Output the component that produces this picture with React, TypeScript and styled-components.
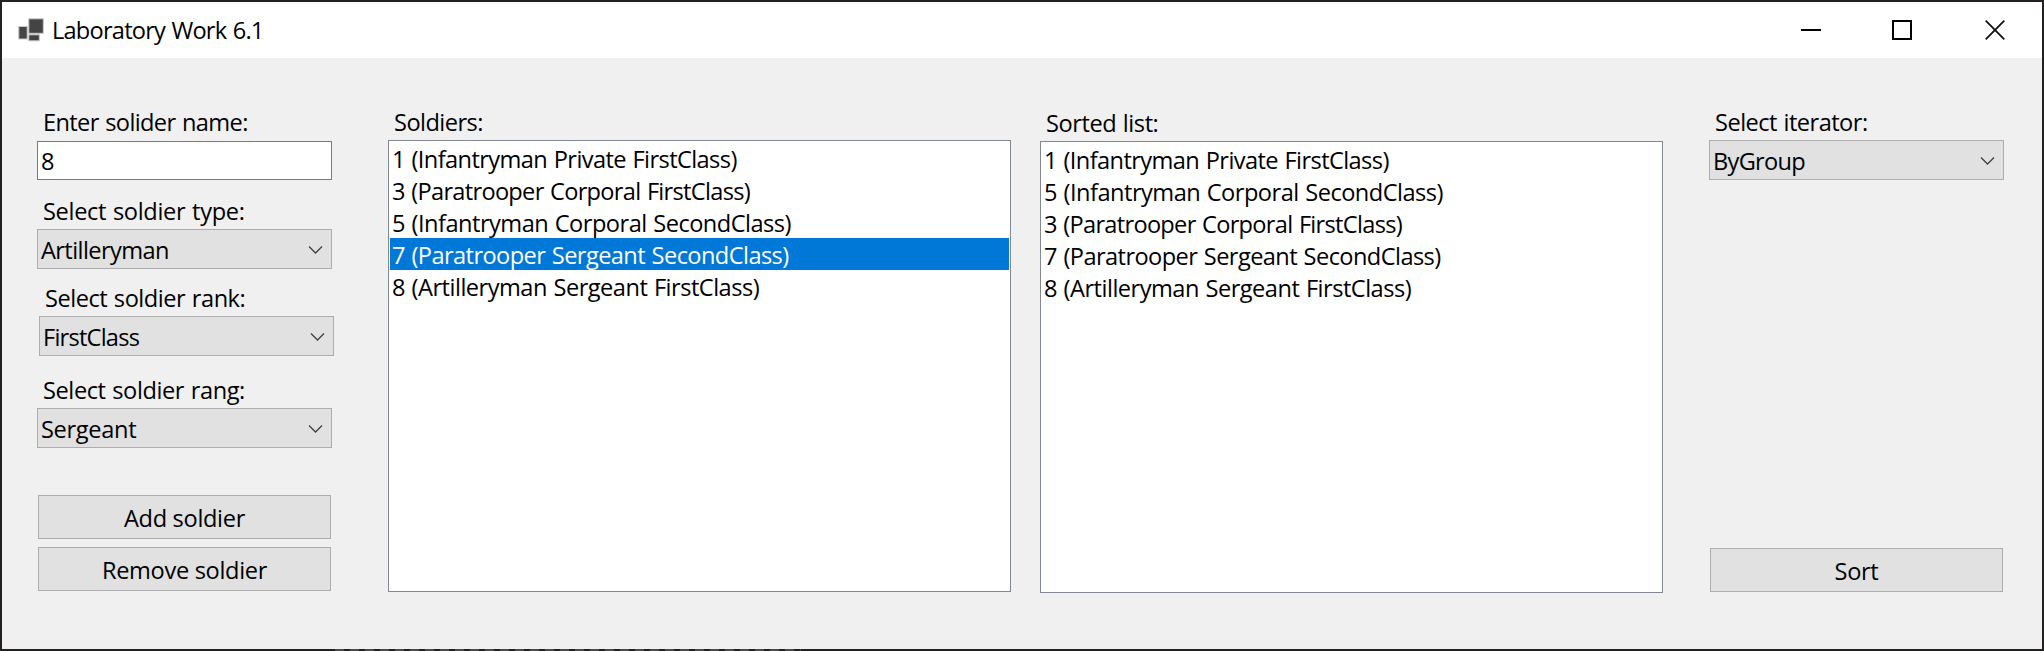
import React from "react";
import styled, { createGlobalStyle } from "styled-components";

const GlobalStyle = createGlobalStyle`
  * { box-sizing: border-box; }
  body { margin: 0; }
`;

const Window = styled.div`
  width: 2044px;
  height: 651px;
  border: 2px solid #222021;
  border-bottom: 0;
  background: #f0f0f0;
  font-family: "Open Sans", "Noto Sans", sans-serif;
  font-size: 23.6px;
  line-height: 32px;
  word-spacing: 1px;
  color: #000;
  overflow: hidden;
  white-space: nowrap;
`;

const TitleBar = styled.header`
  display: flex;
  align-items: center;
  height: 56px;
  padding: 0 37px 0 16px;
  background: #fff;
`;

const Title = styled.h1`
  flex: 1;
  margin: 0 0 0 6px;
  font: inherit;
  letter-spacing: -0.78px;
`;

const WindowControls = styled.div`
  display: grid;
  grid-template-columns: 91px 93px 20px;
`;

const Body = styled.main`
  display: flex;
  align-items: flex-start;
  height: 591px;
  padding: 48px 38px 0 35px;
`;

const Column = styled.section<{ $left?: number; $top?: number; $width: number }>`
  display: flex;
  flex-direction: column;
  width: ${(p) => p.$width}px;
  margin-left: ${(p) => p.$left ?? 0}px;
  margin-top: ${(p) => p.$top ?? 0}px;
`;

const Field = styled.div<{ $top?: number; $shift?: number }>`
  display: flex;
  flex-direction: column;
  width: 295px;
  margin-top: ${(p) => p.$top ?? 0}px;
  margin-left: ${(p) => p.$shift ?? 0}px;
`;

const Label = styled.label<{ $gap?: number; $track: number }>`
  height: 32px;
  padding-left: 6px;
  margin-bottom: ${(p) => p.$gap ?? 2}px;
  letter-spacing: ${(p) => p.$track}px;
`;

const TextBox = styled.div`
  height: 39px;
  padding: 3px 3px 0;
  border: 1px solid #7a7a7a;
  background: #fff;
`;

const ComboBox = styled.div<{ $track: number }>`
  display: flex;
  justify-content: space-between;
  height: 40px;
  padding: 4px 8px 0 3px;
  border: 1px solid #adadad;
  background: #e1e1e1;
  letter-spacing: ${(p) => p.$track}px;
`;

const Button = styled.button<{ $top?: number }>`
  width: 293px;
  height: 44px;
  margin: ${(p) => p.$top ?? 0}px 0 0 1px;
  padding: 2px 0 0;
  border: 1px solid #adadad;
  background: #e1e1e1;
  color: inherit;
  font: inherit;
  letter-spacing: -0.33px;
`;

const ListBox = styled.ul`
  height: 452px;
  margin: 0;
  padding: 1px;
  border: 1px solid #828790;
  background: #fff;
  list-style: none;
`;

const ListItem = styled.li<{ $selected?: boolean; $track: number }>`
  height: 32px;
  padding: 1px 0 0 2px;
  background: ${(p) => (p.$selected ? "#0078d7" : "transparent")};
  color: ${(p) => (p.$selected ? "#fff" : "inherit")};
  letter-spacing: ${(p) => p.$track}px;
`;

const Chevron = styled.svg`
  margin-top: 11px;
  flex: none;
`;

const BottomEdge = styled.div`
  height: 2px;
  padding-left: 333px;
  background: #222021;
`;

const EdgeMarks = styled.div`
  width: 466px;
  height: 2px;
  background: repeating-linear-gradient(90deg, #4c4a48 0 9px, #222021 9px 15px);
`;

const AppIcon = () => (
  <svg width="28" height="24" viewBox="0 0 28 24">
    <g fill="#444" stroke="#c8c8c8" strokeWidth="1">
      <rect x="0.8" y="8.5" width="8.4" height="12.5" />
      <rect x="10.8" y="0.8" width="14.5" height="14.5" />
      <rect x="10.8" y="16.8" width="10.5" height="6" />
    </g>
  </svg>
);

const Select = ({ value, track }: { value: string; track: number }) => (
  <ComboBox $track={track}>
    <span>{value}</span>
    <Chevron width="15" height="10" viewBox="0 0 15 10">
      <path d="M1 1.5 L7.5 8 L14 1.5" fill="none" stroke="#404040" strokeWidth="1.3" />
    </Chevron>
  </ComboBox>
);

const soldiers = [
  { text: "1 (Infantryman Private FirstClass)", track: -0.59 },
  { text: "3 (Paratrooper Corporal FirstClass)", track: -0.7 },
  { text: "5 (Infantryman Corporal SecondClass)", track: -0.52 },
  { text: "7 (Paratrooper Sergeant SecondClass)", track: -0.58 },
  { text: "8 (Artilleryman Sergeant FirstClass)", track: -0.51 },
];
const sorted = [soldiers[0], soldiers[2], soldiers[1], soldiers[3], soldiers[4]];

export default function App() {
  return (
    <Window>
      <GlobalStyle />
      <TitleBar>
        <AppIcon />
        <Title>Laboratory Work 6.1</Title>
        <WindowControls>
          <svg width="20" height="20"><rect y="9" width="20" height="2" /></svg>
          <svg width="20" height="20">
            <rect x="1" y="1" width="18" height="18" fill="none" stroke="#000" strokeWidth="2" />
          </svg>
          <svg width="20" height="20">
            <path d="M0.7 0.7 L19.3 19.3 M19.3 0.7 L0.7 19.3" stroke="#111" strokeWidth="1.8" />
          </svg>
        </WindowControls>
      </TitleBar>
      <Body>
        <Column $width={297}>
          <Field>
            <Label $gap={3} $track={-0.63}>Enter solider name:</Label>
            <TextBox>8</TextBox>
          </Field>
          <Field $top={15}>
            <Label $track={-0.33}>Select soldier type:</Label>
            <Select value="Artilleryman" track={-0.6} />
          </Field>
          <Field $top={13} $shift={2}>
            <Label $track={-0.48}>Select soldier rank:</Label>
            <Select value="FirstClass" track={-0.77} />
          </Field>
          <Field $top={18}>
            <Label $track={-0.42}>Select soldier rang:</Label>
            <Select value="Sergeant" track={-0.33} />
          </Field>
          <Button $top={47}>Add soldier</Button>
          <Button $top={8}>Remove soldier</Button>
        </Column>
        <Column $width={623} $left={54}>
          <Label $track={-0.55}>Soldiers:</Label>
          <ListBox>
            {soldiers.map((s, i) => (
              <ListItem key={s.text} $selected={i === 3} $track={s.track}>{s.text}</ListItem>
            ))}
          </ListBox>
        </Column>
        <Column $width={623} $left={29} $top={1}>
          <Label $track={-0.45}>Sorted list:</Label>
          <ListBox>
            {sorted.map((s) => (
              <ListItem key={s.text} $track={s.track}>{s.text}</ListItem>
            ))}
          </ListBox>
        </Column>
        <Column $width={295} $left={46}>
          <Label $track={-0.53}>Select iterator:</Label>
          <Select value="ByGroup" track={-0.7} />
          <Button $top={368}>Sort</Button>
        </Column>
      </Body>
      <BottomEdge>
        <EdgeMarks />
      </BottomEdge>
    </Window>
  );
}
